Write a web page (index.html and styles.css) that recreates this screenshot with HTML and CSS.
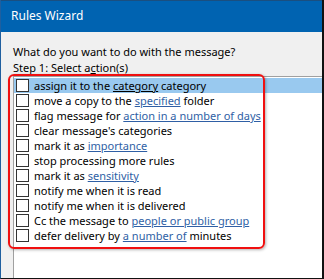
FILE: index.html
```html
<!DOCTYPE html>
<html lang="en">
<head>
    <meta charset="UTF-8">
    <meta name="viewport" content="width=device-width, initial-scale=1.0">
    <title>Rules Wizard</title>
    <link rel="stylesheet" href="styles.css">
</head>
<body>
    <div class="window">
        <div class="titlebar">Rules Wizard</div>
        <div class="content">
            <p class="question">What do you want to do with the message?</p>
            <p class="step">Step 1: Select a<u>c</u>tion(s)</p>
            <div class="list">
                <div class="row selected"><span class="box"></span><span>assign it to the <span class="link">category</span> category</span></div>
                <div class="row"><span class="box"></span><span>move a copy to the <span class="link">specified</span> folder</span></div>
                <div class="row"><span class="box"></span><span>flag message for <span class="link">action in a number of days</span></span></div>
                <div class="row"><span class="box"></span><span>clear message's categories</span></div>
                <div class="row"><span class="box"></span><span>mark it as <span class="link">importance</span></span></div>
                <div class="row"><span class="box"></span><span>stop processing more rules</span></div>
                <div class="row"><span class="box"></span><span>mark it as <span class="link">sensitivity</span></span></div>
                <div class="row"><span class="box"></span><span>notify me when it is read</span></div>
                <div class="row"><span class="box"></span><span>notify me when it is delivered</span></div>
                <div class="row"><span class="box"></span><span>Cc the message to <span class="link">people or public group</span></span></div>
                <div class="row"><span class="box"></span><span>defer delivery by <span class="link">a number of</span> minutes</span></div>
            </div>
            <div class="highlight"></div>
        </div>
    </div>
</body>
</html>
```

FILE: styles.css
```css
body {
    margin: 0;
    font-family: "Noto Sans", "Open Sans", sans-serif;
    font-size: 11px;
    color: #000;
}
.window {
    position: relative;
    width: 324px;
    height: 279px;
    box-sizing: border-box;
    border-left: 1px solid #1f5f9f;
    border-right: 2px solid #111;
    border-bottom: 1px solid #111;
    background-color: #f0f0f0;
    overflow: hidden;
}
.titlebar {
    height: 32px;
    background-color: #0063b1;
    border-top: 1px solid #1a4f80;
    box-sizing: border-box;
    color: #fff;
    font-size: 12px;
    line-height: 30px;
    padding-left: 10px;
}
.content {
    padding: 12px 0 0 12px;
}
.question, .step {
    margin: 0;
    line-height: 16px;
}
.list {
    margin-top: 0;
    height: 220px;
    background-color: #fff;
    border-top: 1px solid #a0a0a0;
    border-left: 1px solid #a0a0a0;
    padding-top: 1px;
}
.row {
    display: flex;
    align-items: center;
    height: 15px;
    line-height: 15px;
    white-space: pre;
    padding-left: 2px;
}
.row.selected {
    background-color: #99c9ef;
}
.box {
    flex: none;
    width: 11px;
    height: 11px;
    border: 1px solid #333;
    background-color: #fff;
    margin-right: 5px;
}
.link {
    color: #2f5fa5;
    text-decoration: underline;
}
.selected .link {
    color: #000;
}
.highlight {
    position: absolute;
    left: 7px;
    top: 74px;
    width: 253px;
    height: 171px;
    border: 2px solid #f01010;
    border-radius: 6px;
    box-shadow: 1px 1px 3px rgba(0, 0, 0, 0.3);
}
```
